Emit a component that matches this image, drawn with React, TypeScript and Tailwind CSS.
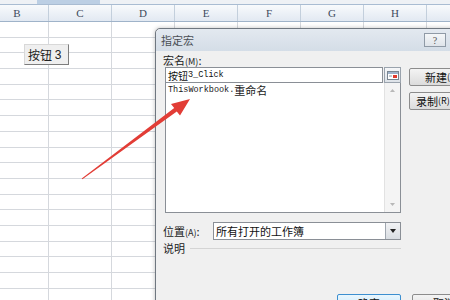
import React from "react"

const cols = ["B", "C", "D", "E", "F", "G", "H", ""]
const rows = Array.from({ length: 18 })

const cjk = { fontFamily: '"Noto Sans CJK SC", "Liberation Sans", sans-serif' }

function Sheet() {
  return (
    <div className="flex flex-col w-[450px] h-[300px] bg-white">
      {/* strip above the column headers */}
      <div className="h-[5px] flex shrink-0 bg-[#eef1f5] border-b border-[#a9bcd2]">
        <div className="ml-[37px] w-[63px] bg-[#bccfe4]" />
      </div>
      {/* column letters */}
      <div className="flex -ml-[14px] h-[17px] shrink-0 bg-gradient-to-b from-[#f8fafc] to-[#e2e9f2] border-b border-[#9fb3c9]">
        {cols.map((c, i) => (
          <div
            key={i}
            className="w-[63px] shrink-0 border-r border-[#c3cfdc] flex items-center justify-center text-[11px] text-[#3d4a5c] font-['Liberation_Serif',serif]"
          >
            {c}
          </div>
        ))}
      </div>
      {/* cells */}
      <div className="flex flex-col -ml-[14px]">
        {rows.map((_, r) => (
          <div key={r} className="flex h-[15.7px] shrink-0">
            {cols.map((_, i) => (
              <div key={i} className="w-[63px] shrink-0 border-r border-b border-[#d5d8dd]" />
            ))}
          </div>
        ))}
      </div>
    </div>
  )
}

function Dialog() {
  return (
    <div
      className="absolute left-[155px] top-[28px] w-[340px] h-[300px] bg-[#f0f0f0] border border-[#6f7780] rounded-tl-[5px] shadow-[0_0_4px_rgba(0,0,0,0.25)] flex flex-col"
      style={cjk}
    >
      {/* title bar */}
      <div className="h-[22px] shrink-0 rounded-tl-[5px] bg-gradient-to-b from-[#e3e9f0] to-[#d4dde7] flex items-center pl-[5px]">
        <span className="w-[33px] shrink-0 text-[11px] text-[#4a4f55]">指定宏</span>
        <div className="ml-[230px] w-[22px] h-[14px] border border-[#8f9aa6] bg-gradient-to-b from-[#f4f6f8] to-[#dfe4ea] flex items-center justify-center text-[10px] text-[#555] font-['Liberation_Serif',serif]">
          ?
        </div>
      </div>

      {/* body */}
      <div className="flex gap-[7px] pl-[7px] pt-[3px]">
        <div className="w-[238px] shrink-0 flex flex-col">
          <div className="h-[12px] text-[11px] leading-[12px] text-[#222]">
            宏名<span className="text-[9px]">(M)</span>:
          </div>
          <div className="mt-[1px] ml-[2px] flex h-[16px]">
            <div className="flex-1 bg-white border border-[#8a8f96] flex items-center pl-[2px] text-[#111]">
              <span className="text-[10px]">按钮</span>
              <span className="text-[8.5px] font-['Liberation_Mono',monospace]">3_Click</span>
            </div>
            <div className="w-[17px] ml-[1px] border border-[#9aa3ad] bg-gradient-to-b from-[#f6f7f9] to-[#dde2e8] flex items-center justify-center">
              <svg width="12" height="9" viewBox="0 0 12 9">
                <rect x="0.5" y="0.5" width="11" height="8" fill="#fff" stroke="#7a8590" />
                <rect x="1" y="1" width="10" height="2" fill="#9fb3cb" />
                <rect x="6" y="4" width="4" height="3" fill="#e03a2e" />
                <line x1="2" y1="5" x2="5" y2="5" stroke="#8a94a0" />
              </svg>
            </div>
          </div>
          <div className="ml-[2px] h-[130px] bg-white border border-[#8a8f96] border-t-0 flex">
            <div className="flex-1 pl-[2px]">
              <div className="h-[14px] flex items-center text-[#1a1a1a]">
                <span className="text-[8.5px] font-['Liberation_Mono',monospace]">ThisWorkbook.</span>
                <span className="text-[11px]">重命名</span>
              </div>
            </div>
            <div className="w-[16px] bg-[#f4f4f4] border-l border-[#e2e2e2] flex flex-col items-center justify-between py-[6px]">
              <svg width="5" height="3" viewBox="0 0 5 3">
                <path d="M0 3 L2.5 0 L5 3 Z" fill="#b8b8b8" />
              </svg>
              <svg width="5" height="3" viewBox="0 0 5 3">
                <path d="M0 0 L2.5 3 L5 0 Z" fill="#b8b8b8" />
              </svg>
            </div>
          </div>
          <div className="mt-[9px] flex items-center h-[18px]">
            <span className="w-[50px] text-[11px] text-[#222]">
              位置<span className="text-[9px]">(A)</span>:
            </span>
            <div className="flex-1 h-[18px] bg-white border border-[#8a8f96] flex items-center">
              <span className="flex-1 pl-[2px] text-[11px] text-[#111]">所有打开的工作簿</span>
              <div className="w-[15px] h-full border-l border-[#a0a7b0] bg-gradient-to-b from-[#f2f3f5] to-[#d9dde2] flex items-center justify-center">
                <svg width="6" height="4" viewBox="0 0 6 4">
                  <path d="M0 0 L3 4 L6 0 Z" fill="#222" />
                </svg>
              </div>
            </div>
          </div>
          <div className="mt-[2px] flex items-center h-[13px]">
            <span className="text-[11px] text-[#222]">说明</span>
            <div className="flex-1 ml-[5px] border-t border-[#d4d4d4]" />
          </div>
          <div className="mt-[39px] flex justify-end">
            <div className="w-[64px] h-[18px] rounded-[2px] border border-[#3c8fd0] bg-gradient-to-b from-[#eaf6fd] to-[#bee6fd] flex items-center justify-center text-[11px] text-[#111]">
              确定
            </div>
          </div>
        </div>
        <div className="shrink-0 flex flex-col gap-[6px] pt-[14px] pl-[1px]">
          <div className="w-[76px] h-[18px] rounded-[2px] border border-[#8c8c8c] bg-gradient-to-b from-[#f4f4f4] to-[#dcdcdc] flex items-center pl-[15px] text-[11px] text-[#111]">
            新建<span className="text-[9px]">(N)</span>
          </div>
          <div className="w-[76px] h-[18px] rounded-[2px] border border-[#8c8c8c] bg-gradient-to-b from-[#f4f4f4] to-[#dcdcdc] flex items-center pl-[6px] text-[11px] text-[#111]">
            录制<span className="text-[9px]">(R)</span>...
          </div>
          <div className="mt-[178px] ml-[3px] w-[64px] h-[18px] rounded-[2px] border border-[#8c8c8c] bg-gradient-to-b from-[#f4f4f4] to-[#dcdcdc] flex items-center justify-center text-[11px] text-[#111]">
            取消
          </div>
        </div>
      </div>
    </div>
  )
}

export default function App() {
  return (
    <div className="relative w-[450px] h-[300px] overflow-hidden">
      <Sheet />

      {/* form button sitting on the sheet */}
      <div
        className="absolute left-[24px] top-[44px] w-[45px] h-[21px] bg-[#efefef] border border-[#d8d8d8] border-r-[#7d7d7d] border-b-[#7d7d7d] flex items-center pl-[3px] text-[12px] text-[#222]"
        style={cjk}
      >
        按钮&nbsp;<span className="font-['Liberation_Sans',sans-serif]">3</span>
      </div>

      <Dialog />

      {/* red pointer arrow */}
      <svg className="absolute inset-0 pointer-events-none" width="450" height="300" viewBox="0 0 450 300">
        <polygon
          points="82.4,179.3 176.8,111.4 180,115.6 190,99 171,103.9 174.2,108 81.7,178.6"
          fill="#e23d36"
        />
      </svg>
    </div>
  )
}
